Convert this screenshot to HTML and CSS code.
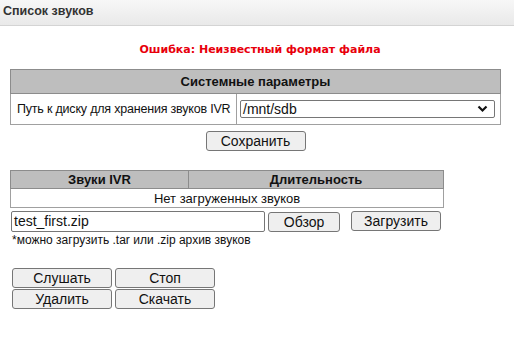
FILE: index.html
```html
<!DOCTYPE html>
<html lang="ru">

<head>
    <meta charset="UTF-8">
    <title>Список звуков</title>
    <link rel="stylesheet" href="styles.css">
</head>

<body>
    <div class="title-bar">Список звуков</div>

    <div class="content">
        <div class="error">Ошибка: Неизвестный формат файла</div>

        <!-- системные параметры -->
        <table class="grid params">
            <tr>
                <th colspan="2">Системные параметры</th>
            </tr>
            <tr>
                <td class="label">Путь к диску для хранения звуков IVR</td>
                <td class="value">
                    <div class="select">
                        <span>/mnt/sdb</span>
                        <svg width="11" height="8" viewBox="0 0 11 8">
                            <path d="M1.5 1.5 L5.5 5.5 L9.5 1.5" fill="none" stroke="#111" stroke-width="2.2" />
                        </svg>
                    </div>
                </td>
            </tr>
        </table>
        <div class="save-row">
            <button class="btn save">Сохранить</button>
        </div>

        <!-- список звуков -->
        <table class="grid sounds">
            <tr>
                <th class="col-name">Звуки IVR</th>
                <th>Длительность</th>
            </tr>
            <tr>
                <td colspan="2" class="empty">Нет загруженных звуков</td>
            </tr>
        </table>

        <div class="upload">
            <div class="file-field">test_first.zip</div>
            <button class="btn browse">Обзор</button>
            <button class="btn load">Загрузить</button>
        </div>
        <div class="hint">*можно загрузить .tar или .zip архив звуков</div>

        <div class="actions">
            <button class="btn">Слушать</button>
            <button class="btn">Стоп</button>
            <button class="btn">Удалить</button>
            <button class="btn">Скачать</button>
        </div>
    </div>
</body>

</html>
```

FILE: styles.css
```css
body {
    margin: 0;
    font-family: "Liberation Sans", Arial, sans-serif;
    font-size: 13px;
    color: #111;
    background-color: white;
}

.title-bar {
    height: 25px;
    padding-left: 3px;
    border-bottom: 1px solid #d4d4d4;
    background: linear-gradient(#f7f7f7, #e9e9e9);

    font-family: "Liberation Sans", Arial, sans-serif;
    font-size: 12.5px;
    font-weight: bold;
    color: #333;
    line-height: 23px;
}

.content {
    padding: 0 10px;
}

.error {
    width: 500px;
    margin-top: 17px;
    height: 15px;
    text-align: center;

    font-family: "DejaVu Sans", sans-serif;
    font-size: 11px;
    font-weight: bold;
    color: #e8000b;
}

.grid {
    border-collapse: collapse;
    border: 1px solid #8c8c8c;
}

.grid th {
    background-color: #bebebe;
    border: 1px solid #8c8c8c;
    font-weight: bold;
    padding: 0;
}

.grid td {
    border: 1px solid #a0a0a0;
    padding: 0;
}

.params {
    margin-top: 11px;
    width: 491px;
}

.params th {
    height: 23px;
}

.params .label {
    height: 30px;
    width: 219px;
    padding-left: 6px;
    white-space: nowrap;
    font-size: 12.5px;
    letter-spacing: -0.2px;
}

.params .value {
    padding: 0 5px 0 3px;
}

.select {
    height: 16px;
    border: 1px solid #767676;
    border-radius: 2px;
    padding: 0 6px 0 2px;

    display: flex;
    justify-content: space-between;
    align-items: center;
    font-size: 14px;
}

.save-row {
    width: 491px;
    margin-top: 6px;
    display: flex;
    justify-content: center;
}

.btn {
    background-color: #efefef;
    border: 1px solid #767676;
    border-radius: 3px;
    font-family: "Liberation Sans", Arial, sans-serif;
    font-size: 14px;
    color: #111;
    padding: 0;
    height: 20px;
}

.save {
    width: 100px;
}

.sounds {
    margin-top: 19px;
    width: 434px;
}

.sounds th {
    height: 17px;
}

.sounds .col-name {
    width: 177px;
}

.empty {
    height: 18px;
    text-align: center;
}

.upload {
    margin-top: 3px;
    padding-left: 1px;
    display: flex;
    align-items: flex-start;
}

.file-field {
    width: 250px;
    height: 19px;
    border: 1px solid #767676;
    border-radius: 2px;
    padding-left: 2px;
    font-size: 14px;
    line-height: 19px;
}

.browse {
    width: 72px;
    margin-left: 3px;
    margin-top: 1px;
}

.load {
    width: 90px;
    margin-left: 11px;
}

.hint {
    padding-left: 2px;
    margin-top: 1px;
    font-size: 12px;
    line-height: 14px;
}

.actions {
    margin-top: 21px;
    padding-left: 2px;
    display: grid;
    grid-template-columns: 100px 100px;
    column-gap: 3px;
    row-gap: 1px;
}
```
